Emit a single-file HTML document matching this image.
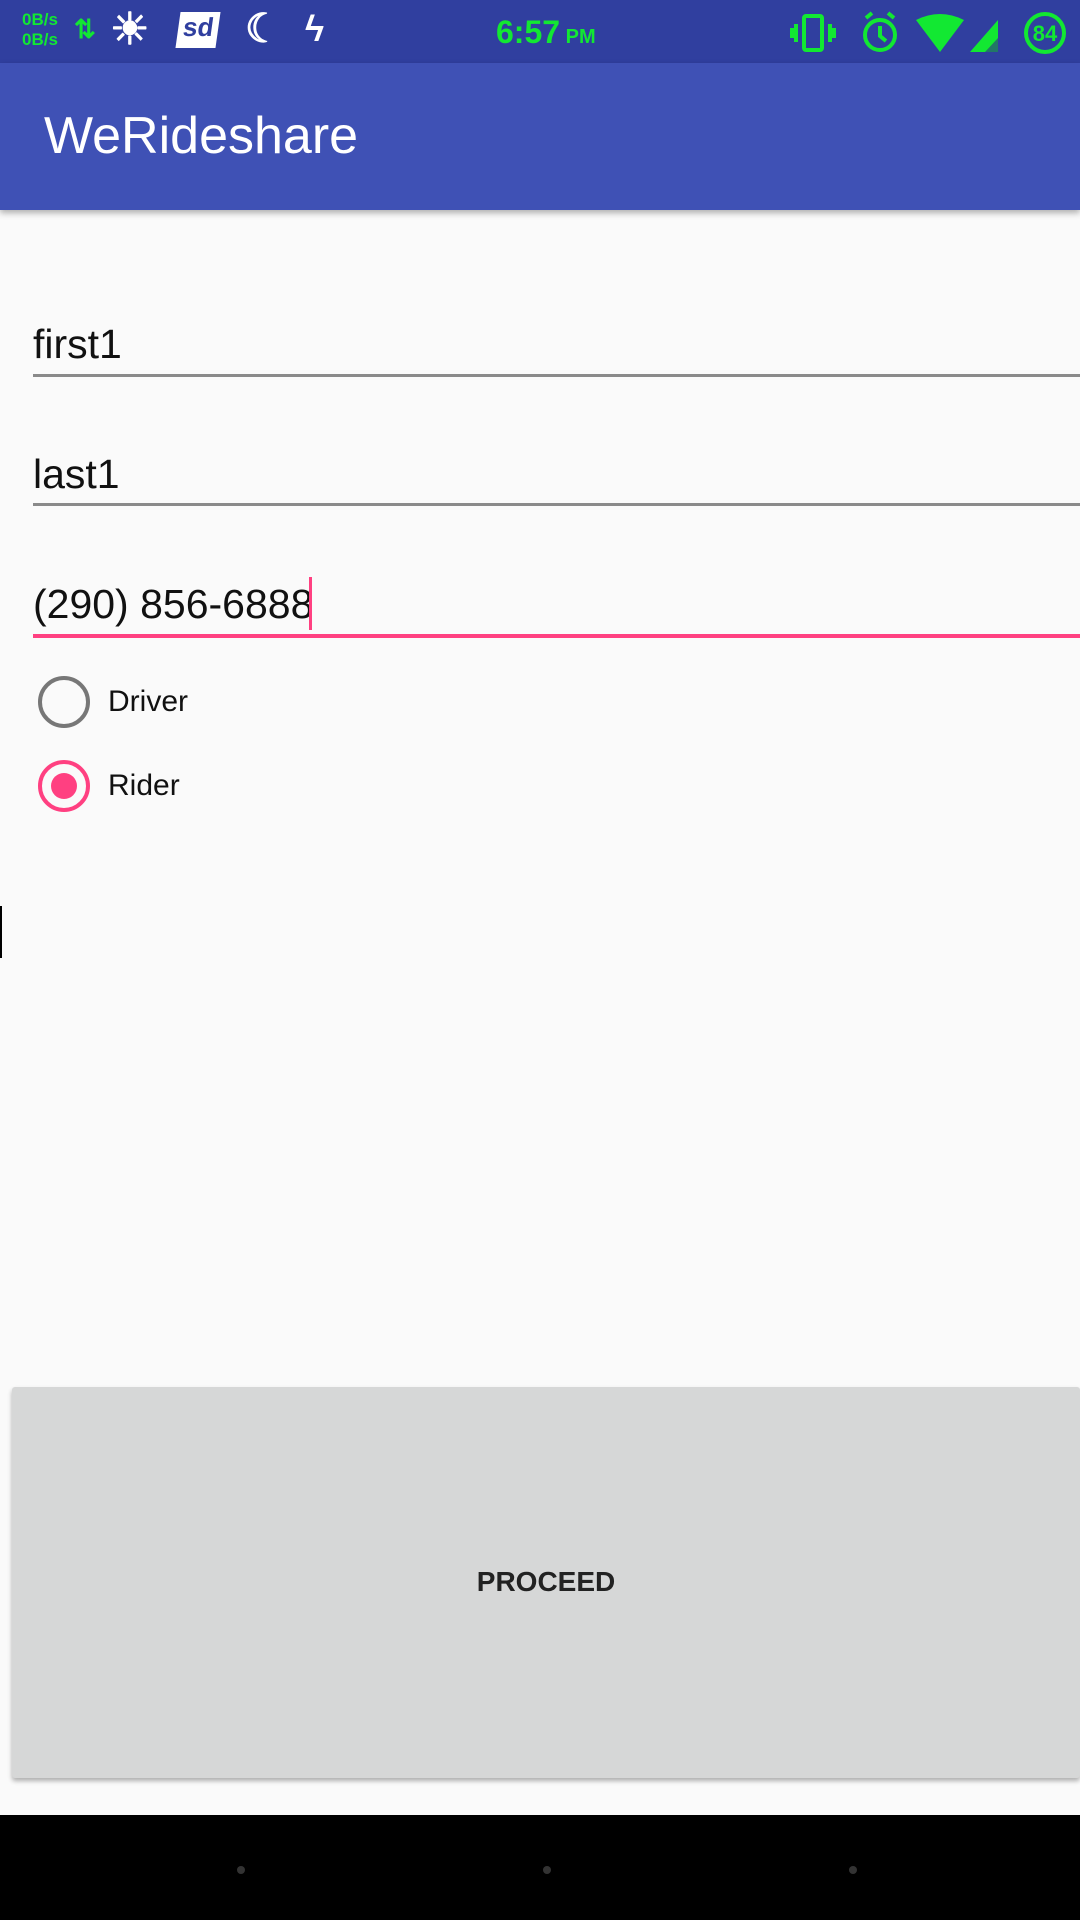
<!DOCTYPE html>
<html><head><style>
body{margin:0;width:1080px;height:1920px;background:#fafafa;position:relative;overflow:hidden;font-family:"Liberation Sans",sans-serif}
.a{position:absolute}
.sb{left:0;top:0;width:1080px;height:63px;background:#303f9f}
.ab{left:0;top:63px;width:1080px;height:147px;background:#3f51b5;box-shadow:0 3px 6px rgba(0,0,0,.3)}
.g{color:#12e832;font-weight:bold}
.f{left:33px;font-size:41px;color:#111}
.ln{left:33px;width:1047px;height:3px;background:#8a8a8a}
</style></head><body>
<div class="a sb"></div>
<div class="a g" style="left:22px;top:10px;font-size:17px;line-height:20px">0B/s<br>0B/s</div>
<div class="a g" style="left:74px;top:14px;font-size:26px">⇅</div>
<div class="a" style="left:110px;top:6px;color:#fff;font-size:44px;line-height:48px;font-weight:bold">☀</div>
<div class="a" style="left:178px;top:12px;width:40px;height:36px;background:#fff;color:#303f9f;font-weight:bold;font-size:26px;text-align:center;transform:skew(-8deg)">sd</div>
<div class="a" style="left:245px;top:6px;color:#fff;font-size:40px;font-weight:bold">☾</div>
<div class="a" style="left:305px;top:8px;color:#fff;font-size:36px;font-weight:bold">ϟ</div>
<div class="a g" style="left:496px;top:14px;font-size:32px">6:57<span style="font-size:20px"> PM</span></div>
<svg class="a" style="left:790px;top:10px" width="290" height="46" viewBox="0 0 290 46">
<g fill="none" stroke="#12e832" stroke-width="4">
<rect x="14" y="6" width="18" height="34" rx="2"/><path d="M6 14v18M40 14v18M2 18v10M44 18v10"/>
<circle cx="90" cy="25" r="15"/><path d="M90 16v10l6 5M76 8l6-5M104 8l-6-5"/>
<circle cx="255" cy="23" r="19"/></g>
<path d="M126 10Q150-2 174 10L150 42Z" fill="#12e832"/>
<path d="M180 42L208 10V42Z" fill="#12e832"/><path d="M195 42L208 28V42Z" fill="#227766"/>
<text x="255" y="31" font-size="22" font-weight="bold" fill="#12e832" text-anchor="middle" font-family="Liberation Sans">84</text>
</svg>
<div class="a ab"></div>
<div class="a" style="left:44px;top:106px;color:#fff;font-size:52px">WeRideshare</div>
<div class="a f" style="top:321px">first1</div>
<div class="a ln" style="top:374px"></div>
<div class="a f" style="top:451px">last1</div>
<div class="a ln" style="top:503px"></div>
<div class="a f" style="top:581px">(290) 856-6888</div>
<div class="a" style="left:309px;top:577px;width:3px;height:53px;background:#ff4081"></div>
<div class="a" style="left:33px;top:634px;width:1047px;height:4px;background:#ff4081"></div>
<div class="a" style="left:38px;top:676px;width:52px;height:52px;border:4px solid #777;border-radius:50%;box-sizing:border-box"></div>
<div class="a" style="left:108px;top:685px;font-size:30px;color:#111">Driver</div>
<div class="a" style="left:38px;top:760px;width:52px;height:52px;border:4px solid #ff4081;border-radius:50%;box-sizing:border-box"></div>
<div class="a" style="left:51px;top:773px;width:26px;height:26px;background:#ff4081;border-radius:50%"></div>
<div class="a" style="left:108px;top:769px;font-size:30px;color:#111">Rider</div>
<div class="a" style="left:0;top:906px;width:2px;height:52px;background:#000"></div>
<div class="a" style="left:12px;top:1387px;width:1068px;height:391px;background:#d6d7d7;border-radius:3px;box-shadow:0 3px 5px rgba(0,0,0,.3)"></div>
<div class="a" style="left:12px;top:1566px;width:1068px;text-align:center;font-size:28px;font-weight:bold;color:#222">PROCEED</div>
<div class="a" style="left:0;top:1815px;width:1080px;height:105px;background:#000"></div>
<div class="a" style="left:237px;top:1866px;width:8px;height:8px;border-radius:50%;background:#333"></div>
<div class="a" style="left:543px;top:1866px;width:8px;height:8px;border-radius:50%;background:#333"></div>
<div class="a" style="left:849px;top:1866px;width:8px;height:8px;border-radius:50%;background:#333"></div>
</body></html>
